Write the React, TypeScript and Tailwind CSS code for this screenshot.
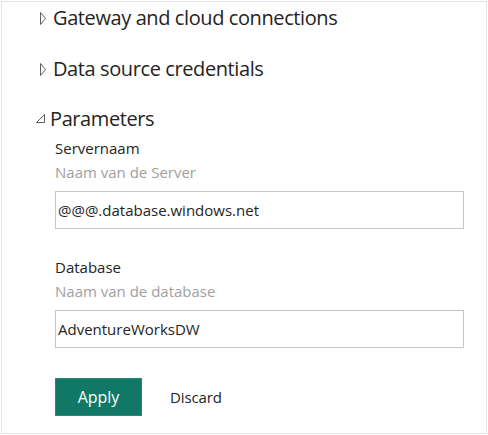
import React from "react";

const font = { fontFamily: '"Open Sans", "Noto Sans", sans-serif' };

// Outline chevron for a collapsed section
const Collapsed = () => (
  <svg width="7" height="13" viewBox="0 0 7 13" className="shrink-0">
    <polygon points="0.5,0.5 5.5,6.5 0.5,12.5" fill="none" stroke="#605e5c" strokeWidth="1" />
  </svg>
);

// Outline corner triangle for an expanded section
const Expanded = () => (
  <svg width="10" height="10" viewBox="0 0 10 10" className="shrink-0">
    <polygon points="0.5,8.5 8.5,0.5 8.5,8.5" fill="none" stroke="#605e5c" strokeWidth="1" />
  </svg>
);

interface FieldProps {
  label: string;
  hint: string;
  value: string;
  className?: string;
}

const Field: React.FC<FieldProps> = ({ label, hint, value, className }) => (
  <div className={className}>
    <div className="text-[15px] leading-[24px] text-[#252423]">{label}</div>
    <div className="text-[15px] leading-[24px] text-[#a19f9d]">{hint}</div>
    <input
      readOnly
      value={value}
      style={font}
      className="mt-[7px] block h-[38px] w-[409px] border border-[#c8c6c4] bg-white pl-[2px] text-[15px] text-[#252423] outline-none"
    />
  </div>
);

export default function App() {
  return (
    <div className="h-[435px] w-[488px] bg-white p-px" style={font}>
      <div className="h-full border border-[#e1e6eb]">
        {/* Collapsed sections */}
        <div className="mt-[2px] flex h-[28px] items-center gap-[6px] pl-[38px] text-[20px] tracking-[-0.4px] text-[#252423]">
          <Collapsed />
          <span>Gateway and cloud connections</span>
        </div>
        <div className="mt-[23px] flex h-[28px] items-center gap-[6px] pl-[38px] text-[20px] tracking-[-0.4px] text-[#252423]">
          <Collapsed />
          <span>Data source credentials</span>
        </div>

        {/* Parameters */}
        <div className="mt-[22px] flex h-[28px] items-center gap-[4px] pl-[34px] text-[20px] tracking-[-0.4px] text-[#252423]">
          <Expanded />
          <span>Parameters</span>
        </div>

        <div className="pl-[53px]">
          <Field
            className="mt-[3px]"
            label="Servernaam"
            hint="Naam van de Server"
            value="@@@.database.windows.net"
          />
          <Field
            className="mt-[26px]"
            label="Database"
            hint="Naam van de database"
            value="AdventureWorksDW"
          />

          <div className="mt-[30px] flex items-center">
            <button className="h-[38px] w-[87px] border border-[#2a8a78] bg-[#117865] text-[16px] text-white">
              Apply
            </button>
            <button className="ml-[28px] h-[38px] text-[15px] tracking-[-0.1px] text-[#252423]">
              Discard
            </button>
          </div>
        </div>
      </div>
    </div>
  );
}
